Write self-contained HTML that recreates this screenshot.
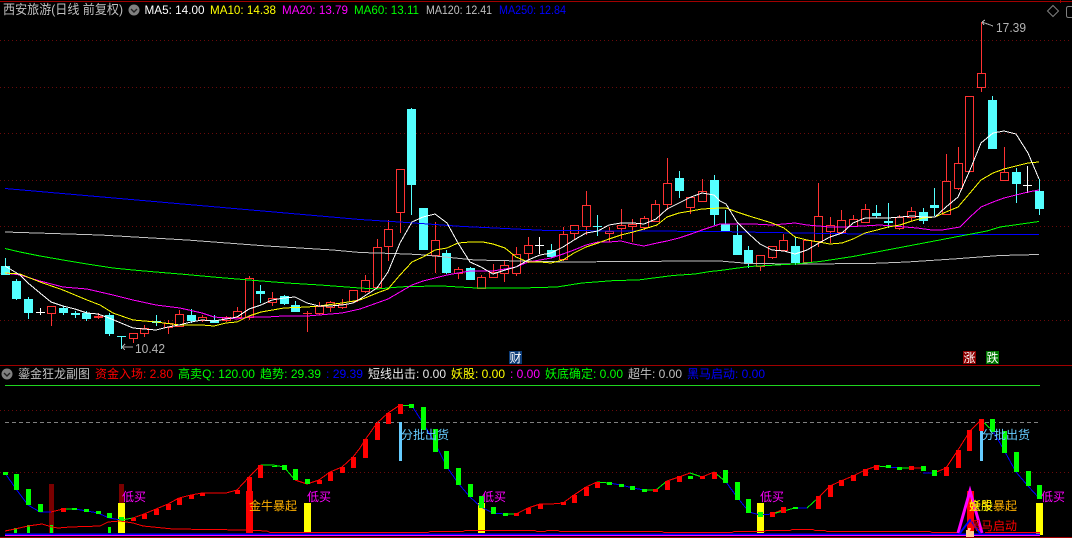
<!DOCTYPE html>
<html lang="zh">
<head>
<meta charset="utf-8">
<title>西安旅游</title>
<style>
html,body{margin:0;padding:0;background:#000;width:1072px;height:538px;overflow:hidden}
svg{display:block;position:absolute;left:0;top:0}
text{font-family:"Liberation Sans","WenQuanYi Zen Hei","Noto Sans CJK SC",sans-serif;font-size:12px}
</style>
</head>
<body>
<svg width="1072" height="538" viewBox="0 0 1072 538" xmlns="http://www.w3.org/2000/svg">
<rect width="1072" height="538" fill="#000"/>
<g shape-rendering="crispEdges">
<path d="M0 1.5H1072M0 365.5H1072M0 537.5H1072" stroke="#a00000" fill="none"/>
<path d="M1060.5 0V3" stroke="#a00000"/>
<path d="M0 40.5H1072M0 87.5H1072M0 133.5H1072M0 180.5H1072M0 226.5H1072M0 273.5H1072M0 320.5H1072M0 410.5H1072M0 472.5H1072" stroke="#6a0a0a" stroke-dasharray="1 3" fill="none"/>
<path d="M5 385.5H1040" stroke="#1fd41f"/>
<path d="M5 422.5H1040" stroke="#808080" stroke-dasharray="4 3"/>

<!-- red candles -->
<path stroke="#ff3232" fill="none" d="M51.5 306V326M98.5 313V319M133.5 333V343M144.5 325V337M168.5 320V334M179.5 310V326M202.5 315V322M226.5 316V322M237.5 307V317M249.5 276V320M272.5 292V306M307.5 311V332M319.5 302V315M330.5 301V312M342.5 299V309M353.5 290V303M365.5 275V293M377.5 239V287M388.5 220V261M400.5 169V233M435.5 222V273M458.5 267V279M481.5 275V288M493.5 264V277M504.5 261V282M516.5 247V276M528.5 237V263M563.5 227V261M574.5 225V240M586.5 191V235M609.5 227V242M621.5 209V239M632.5 219V242M644.5 216V230M655.5 200V221M667.5 158V210M690.5 197V214M702.5 179V201M760.5 255V271M772.5 246V259M783.5 234V250M807.5 240V262M818.5 183V247M830.5 217V243M841.5 210V232M853.5 215V226M865.5 204V222M899.5 215V230M911.5 207V221M946.5 154V215M958.5 147V190M969.5 96V171M981.5 22V92M1004.5 147V180M303 313.5H312"/>
<path stroke="#ff3232" fill="#000" d="M47.5 306.5h8v7h-8zM94.5 316.5h8v1h-8zM129.5 333.5h8v5h-8zM140.5 328.5h8v5h-8zM164.5 323.5h8v4h-8zM175.5 314.5h8v12h-8zM198.5 317.5h8v3h-8zM222.5 317.5h8v3h-8zM233.5 311.5h8v6h-8zM245.5 278.5h8v39h-8zM268.5 298.5h8v4h-8zM315.5 306.5h8v7h-8zM326.5 302.5h8v5h-8zM338.5 304.5h8v3h-8zM349.5 290.5h8v11h-8zM361.5 280.5h8v11h-8zM373.5 247.5h8v40h-8zM384.5 229.5h8v17h-8zM396.5 169.5h8v43h-8zM431.5 240.5h8v15h-8zM454.5 269.5h8v4h-8zM477.5 277.5h8v11h-8zM489.5 272.5h8v5h-8zM500.5 265.5h8v8h-8zM512.5 254.5h8v19h-8zM524.5 245.5h8v8h-8zM559.5 234.5h8v25h-8zM570.5 225.5h8v8h-8zM582.5 205.5h8v21h-8zM605.5 231.5h8v2h-8zM617.5 225.5h8v3h-8zM628.5 224.5h8v2h-8zM640.5 218.5h8v9h-8zM651.5 204.5h8v17h-8zM663.5 183.5h8v21h-8zM686.5 197.5h8v10h-8zM698.5 191.5h8v10h-8zM756.5 255.5h8v11h-8zM768.5 246.5h8v11h-8zM779.5 240.5h8v10h-8zM803.5 240.5h8v22h-8zM814.5 216.5h8v25h-8zM826.5 225.5h8v6h-8zM837.5 220.5h8v12h-8zM849.5 219.5h8v7h-8zM861.5 209.5h8v13h-8zM895.5 217.5h8v11h-8zM907.5 211.5h8v6h-8zM942.5 181.5h8v33h-8zM954.5 163.5h8v25h-8zM965.5 96.5h8v75h-8zM977.5 73.5h8v14h-8zM1000.5 172.5h8v8h-8z"/>
<!-- cyan candles -->
<path stroke="#54ffff" fill="none" d="M5.5 258V275M16.5 279V300M28.5 297V319M63.5 306V315M75.5 311V318M86.5 311V321M109.5 313V336M121.5 336V349M117 336.5h9M156.5 315V326M191.5 309V323M214.5 315V323M260.5 285V303M284.5 295V305M295.5 301V312M411.5 108V215M446.5 250V274M470.5 267V280M551.5 244V258M597.5 215V236M593 226.5h9M679.5 171V198M714.5 175V225M725.5 210V231M737.5 225V255M748.5 246V268M795.5 237V265M876.5 205V218M888.5 203V228M923.5 208V224M934.5 188V216M992.5 96V149M1016.5 168V203M1039.5 179V215"/>
<path fill="#54ffff" d="M1 266h9v9h-9zM12 281h9v18h-9zM24 299h9v14h-9zM59 308h9v5h-9zM71 313h9v2h-9zM82 313h9v6h-9zM105 315h9v19h-9zM152 321h9v2h-9zM187 315h9v6h-9zM210 320h9v3h-9zM256 291h9v3h-9zM280 296h9v8h-9zM291 305h9v7h-9zM407 109h9v76h-9zM419 208h9v42h-9zM442 253h9v20h-9zM466 268h9v12h-9zM547 250h9v7h-9zM675 178h9v13h-9zM710 180h9v35h-9zM721 224h9v7h-9zM733 235h9v20h-9zM744 250h9v14h-9zM791 246h9v17h-9zM872 213h9v3h-9zM884 221h9v2h-9zM919 212h9v9h-9zM930 205h9v3h-9zM988 100h9v49h-9zM1012 172h9v12h-9zM1035 191h9v18h-9z"/>
<!-- white crosses -->
<path stroke="#fff" fill="none" d="M40.5 308V315M36 312.5h9M539.5 237V254M535 245.5h9M1027.5 166V193M1023 185.5h9"/>
</g>

<!-- MA lines -->
<g fill="none" stroke-linejoin="round" shape-rendering="crispEdges">
<!-- MA250 -->
<path stroke="#0000ff" d="M5 188.5L360 219.5L407 222.5L463 226.5L547 230.5L720 231.5L767 232.5L895 234.5L1039 234.5"/>
<!-- MA120 -->
<path stroke="#c0c0c0" d="M5 232L100 235L187 240L227 243L267 246L333 250L360 252.5L393 253.5L418 254.5L440 256.5L475 260L520 261L567 262L627 261.5L697 261L720 261L749 263.5L800 264L870 263.5L907 262L953 259L1000 255.5L1039 254.5"/>
<!-- MA60 -->
<path stroke="#00ff00" d="M5 248.5L20 252L40 256L63 260L87 264L113 268L133 270L156 272L180 274L213 277L249 280L287 283L320 285L360 288L377 289L393 287.5L407 286.5L442 286L477 288L522 288L557 287L582 283L615 280.5L638 280L673 275.5L695 274L710 271.5L720 270.5L749 266.5L795 264L820 261.5L853 256.5L887 250L987 231L1000 227L1039 221.5"/>
<!-- MA20 -->
<path stroke="#ff00ff" d="M5 273L20 275L40 281L63 287L87 289L113 295L133 300L156 305L180 308L202 313L214 317L226 318L237 319L249 317L267 317L283 316L307 316L319 315L342 313L360 309L388 299L412 285L423 281L435 278L447 275L458 273L470 271L493 271L505 269L516 267L528 262L540 260L551 258L563 254L574 250L586 245L598 242L609 242L621 241L633 244L644 246L657 243L667 241L679 238L691 234L702 230L714 226L720 224L753 224L772 225L795 223L807 225L830 227L845 227L880 225L905 227L917 228L932 230L942 230L960 227L970 217L981 207L993 202L1004 198L1016 195L1028 192L1039 190"/>
<!-- MA10 -->
<path stroke="#ffff00" d="M5 273L20 274L40 282L63 290L87 300L100 305L113 313L133 320L156 322L180 325L202 325L214 326L226 323L237 322L249 316L261 312L284 308L307 307L319 306L342 303L360 300L377 293L388 289L400 275L412 262L423 257L435 250L447 248L458 243L470 242L483 242L493 244L505 248L516 257L528 262L540 262L551 263L563 260L574 253L586 247L598 243L609 239L621 235L633 232L644 229L657 225L667 217L679 213L691 211L702 209L720 208L726 208L737 212L749 216L772 223L784 228L795 237L807 240L819 242L830 244L842 243L853 239L865 233L877 230L888 227L900 225L912 221L923 218L935 217L946 212L958 207L970 193L981 180L993 173L1004 169L1016 166L1028 163L1039 162"/>
<!-- MA5 -->
<path stroke="#fff" d="M5 266L20 275L28 283L40 293L51 302L63 306L75 309L87 313L98 314L109 318L121 323L133 328L144 329L156 330L168 327L179 325L191 322L202 320L214 321L226 319L237 317L249 309L261 305L272 300L284 298L295 297L307 303L319 306L330 306L342 305L353 303L360 299L377 288L388 272L400 243L412 222L423 217L435 214L447 223L458 243L470 262L481 267L493 274L505 270L516 267L528 260L540 255L551 253L563 247L574 240L586 233L598 231L609 225L621 223L633 223L644 224L656 219L667 209L679 203L691 197L702 193L714 195L720 201L726 204L737 222L749 234L760 244L772 250L784 251L795 254L807 250L819 243L830 237L842 233L853 223L865 218L877 218L888 218L900 217L912 216L923 217L935 217L946 207L958 197L970 170L981 143L993 133L1004 131L1016 134L1028 153L1039 179"/>
</g>

<!-- annotations -->
<g fill="none" stroke="#aaa" shape-rendering="crispEdges">
<path d="M122 347H133M122 347l3-3M122 347l3 3"/>
<path d="M982 22L993 26M982 22l3-2M982 22l2 3"/>
</g>
<text x="135" y="353" fill="#b4b4b4" style="font-size:13px" textLength="30" lengthAdjust="spacingAndGlyphs">10.42</text>
<text x="996" y="32" fill="#b4b4b4" style="font-size:13px" textLength="30" lengthAdjust="spacingAndGlyphs">17.39</text>

<!-- tags -->
<rect x="509" y="351" width="13" height="13" fill="#0c3c78"/>
<text x="509.5" y="362" fill="#fff">财</text>
<rect x="963" y="351" width="13" height="13" fill="#8c0000"/>
<text x="963.5" y="362" fill="#fff">涨</text>
<rect x="986" y="351" width="13" height="13" fill="#007800"/>
<text x="986.5" y="362" fill="#fff">跌</text>

<!-- top-right icons -->
<path d="M1053 5.5L1058.5 11L1053 16.5L1047.5 11Z" fill="none" stroke="#808080"/>
<path d="M1072 6.5H1068.5Q1066.5 6.5 1066.5 8.5V15.5Q1066.5 17.5 1068.5 17.5H1072" fill="none" stroke="#808080"/>

<!-- main header -->
<text x="3" y="14" fill="#c0c0c0" style="font-size:13px" textLength="120" lengthAdjust="spacingAndGlyphs">西安旅游(日线 前复权)</text>
<circle cx="134" cy="10" r="5.5" fill="#808080"/>
<path d="M131 9l3 3 3-3" fill="none" stroke="#222" stroke-width="1.4"/>
<text x="144.5" y="14" fill="#fff" textLength="60" lengthAdjust="spacingAndGlyphs">MA5: 14.00</text>
<text x="210" y="14" fill="#ffff00" textLength="66" lengthAdjust="spacingAndGlyphs">MA10: 14.38</text>
<text x="282" y="14" fill="#ff00ff" textLength="66" lengthAdjust="spacingAndGlyphs">MA20: 13.79</text>
<text x="354" y="14" fill="#00ff00" textLength="65" lengthAdjust="spacingAndGlyphs">MA60: 13.11</text>
<text x="426" y="14" fill="#c0c0c0" textLength="66" lengthAdjust="spacingAndGlyphs">MA120: 12.41</text>
<text x="499" y="14" fill="#0000ff" textLength="67" lengthAdjust="spacingAndGlyphs">MA250: 12.84</text>

<!-- sub header -->
<circle cx="7" cy="374" r="5.5" fill="#808080"/>
<path d="M4 373l3 3 3-3" fill="none" stroke="#222" stroke-width="1.4"/>
<text x="18" y="378" fill="#c0c0c0" textLength="72" lengthAdjust="spacingAndGlyphs">鎏金狂龙副图</text>
<text x="95" y="378" fill="#ff0000" textLength="78" lengthAdjust="spacingAndGlyphs">资金入场: 2.80</text>
<text x="178" y="378" fill="#00ff00" textLength="77" lengthAdjust="spacingAndGlyphs">高卖Q: 120.00</text>
<text x="260" y="378" fill="#00ff00" textLength="61" lengthAdjust="spacingAndGlyphs">趋势: 29.39</text>
<text x="326" y="378" fill="#0000ff" textLength="37" lengthAdjust="spacingAndGlyphs">: 29.39</text>
<text x="368" y="378" fill="#e8e8e8" textLength="78" lengthAdjust="spacingAndGlyphs">短线出击: 0.00</text>
<text x="451" y="378" fill="#ffff00" textLength="54" lengthAdjust="spacingAndGlyphs">妖股: 0.00</text>
<text x="510" y="378" fill="#ff00ff" textLength="30" lengthAdjust="spacingAndGlyphs">: 0.00</text>
<text x="545" y="378" fill="#00ff00" textLength="78" lengthAdjust="spacingAndGlyphs">妖底确定: 0.00</text>
<text x="628" y="378" fill="#c0c0c0" textLength="54" lengthAdjust="spacingAndGlyphs">超牛: 0.00</text>
<text x="687" y="378" fill="#0000ff" textLength="78" lengthAdjust="spacingAndGlyphs">黑马启动: 0.00</text>

<!-- sub chart -->
<g shape-rendering="crispEdges">
<path fill="#7a0000" d="M49 484h5v49h-5zM119 484h5v20h-5z"/>
<path fill="#ffff00" d="M118 503h7v30h-7zM304 503h7v30h-7zM478 503h7v30h-7zM757 503h7v30h-7zM1036 503h7v32h-7z"/>
<path fill="#66ccff" d="M399 422h3v39h-3zM980 422h3v39h-3z"/>
<path fill="#ff0000" d="M246 491h7v42h-7zM967 491h7v42h-7z"/>

<!-- trend line -->
<g fill="none">
<path stroke="#0000ff" d="M5 473L16 489L28 505L40 512L51 512M75 509L87 511L98 513L109 518L121 520M412 406L423 423L435 443L447 467L458 483L470 497L481 507L493 513L505 514M609 483L621 485L633 488L644 490M726 482L737 497L749 512L760 515L772 514M795 508L807 508M888 467L900 468L911 468M923 473L934 473M993 431L1004 450L1016 472L1028 486L1039 498"/>
<path stroke="#ff0000" d="M51 512L63 509M133 518L144 514L156 509L168 504L179 498L191 495L202 493L226 493L237 490L249 477L261 465M295 480L307 484L319 480L330 472L342 467L353 457L360 448L365 440L377 423L388 413L400 405M516 514L528 508L540 504L551 504L563 503L574 495L586 487L597 482M667 481L679 477L690 473M702 477L714 472M772 514L784 509M818 498L830 486L841 481L853 476L865 470L877 466M911 468L923 468M934 473L946 468L958 450L970 431L981 420"/>
<path stroke="#00ff00" d="M63 509L75 509M121 520L133 518M261 465L273 465L284 467L295 480M400 405L412 406M505 514L516 514M597 482L609 483M644 490L656 490L667 481M690 473L702 477M714 472L726 482M772 514L795 508M807 508L818 498M877 466L888 467M900 468L911 468M981 420L993 431"/>
</g>

<!-- green bars -->
<path fill="#00ff00" d="M3 472h5v3h-5zM14 474h5v16h-5zM26 489h5v16h-5zM38 504h5v8h-5zM72 508h5v2h-5zM84 509h5v3h-5zM96 511h5v3h-5zM107 513h5v5h-5zM119 517h5v4h-5zM272 466h5v1h-5zM282 465h5v5h-5zM293 469h5v11h-5zM305 479h5v5h-5zM409 404h5v4h-5zM421 407h5v23h-5zM433 429h5v23h-5zM444 451h5v18h-5zM456 468h5v17h-5zM468 484h5v13h-5zM479 496h5v12h-5zM491 507h5v7h-5zM503 513h5v3h-5zM607 482h5v3h-5zM619 484h5v3h-5zM630 486h5v4h-5zM642 489h5v3h-5zM688 476h5v3h-5zM723 470h5v13h-5zM735 482h5v18h-5zM746 499h5v14h-5zM758 512h5v5h-5zM793 507h5v2h-5zM886 465h5v3h-5zM897 467h5v3h-5zM921 466h5v5h-5zM932 470h5v6h-5zM990 419h5v13h-5zM1002 431h5v22h-5zM1014 452h5v20h-5zM1026 471h5v15h-5zM1037 485h5v14h-5z"/>
<path fill="#00ff00" d="M14 528h3v5h-3zM27 525h3v8h-3zM50 525h3v8h-3zM108 527h3v6h-3z"/>

<!-- red bars -->
<path fill="#ff0000" d="M61 508h5v4h-5zM131 518h5v3h-5zM142 514h5v5h-5zM154 509h5v6h-5zM166 504h5v6h-5zM177 498h5v7h-5zM189 495h5v4h-5zM200 493h5v3h-5zM235 490h5v4h-5zM247 477h5v14h-5zM258 465h5v13h-5zM317 480h5v4h-5zM328 472h5v9h-5zM340 467h5v6h-5zM351 457h5v11h-5zM363 439h5v19h-5zM375 423h5v17h-5zM386 413h5v11h-5zM398 404h5v10h-5zM514 513h5v3h-5zM526 508h5v6h-5zM538 504h5v5h-5zM561 502h5v3h-5zM572 495h5v8h-5zM584 487h5v9h-5zM595 482h5v6h-5zM653 489h5v3h-5zM665 481h5v9h-5zM677 476h5v6h-5zM700 476h5v3h-5zM712 472h5v7h-5zM770 512h5v5h-5zM781 507h5v6h-5zM816 496h5v13h-5zM828 485h5v12h-5zM839 480h5v6h-5zM851 475h5v6h-5zM863 469h5v7h-5zM874 465h5v5h-5zM909 466h5v4h-5zM944 467h5v9h-5zM956 450h5v18h-5zM967 430h5v21h-5zM979 419h5v12h-5z"/>

<!-- bottom band -->
<path d="M5 534.5H1040" stroke="#0000ff" stroke-width="2"/>
<path d="M5 535.5H1040" stroke="#ff00ff"/>
<path fill="none" stroke="#ff0000" d="M5 531L15 529L28 526L42 524L52 527L58 528L70 527L100 526L108 522L120 521L133 523L143 526L173 529L245 530L267 531L270 532.5L428 532.5L430 531.5L463 531.5L465 530.5L535 530.5L537 531.5L545 531.5L547 530.5L558 530.5L560 531.5L662 531.5L664 532.5L732 532.5L734 531.5L764 531.5L766 530.5L790 530.5L792 529.5L813 529.5L815 530.5L825 530.5L827 531.5L930 531.5L932 532.5L958 532.5"/>
<path d="M985 532.5H1040" stroke="#ff0000"/>
</g>

<path d="M958 533L970 491L982 533" fill="none" stroke="#ff00ff" stroke-width="3"/>
<path d="M960 533L970 520L980 533" fill="none" stroke="#0000ff" stroke-width="2"/>
<path d="M966 537V530h2v-2h3v3h3v6Z" fill="#ffc890"/>

<text x="122" y="501" fill="#ff00ff">低买</text>
<text x="307" y="501" fill="#ff00ff">低买</text>
<text x="482" y="501" fill="#ff00ff">低买</text>
<text x="760" y="501" fill="#ff00ff">低买</text>
<text x="1041" y="501" fill="#ff00ff">低买</text>
<text x="249" y="510" fill="#ffb000">金牛暴起</text>
<text x="969" y="510" fill="#ffb000">金牛暴起</text>
<text x="969" y="510" fill="#ffff00">妖股</text>
<text x="401" y="439" fill="#66ccff">分批出货</text>
<text x="982" y="439" fill="#66ccff">分批出货</text>
<text x="969" y="530" fill="#ff0000">黑马启动</text>
</svg>
</body>
</html>
